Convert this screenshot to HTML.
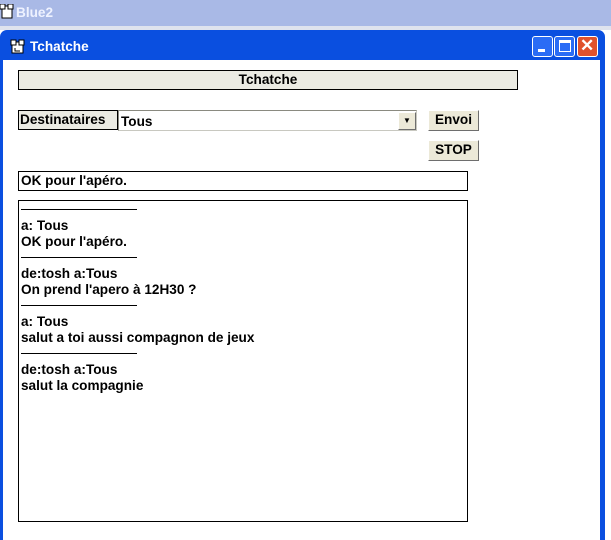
<!DOCTYPE html>
<html><head><meta charset="utf-8"><style>
*{margin:0;padding:0;box-sizing:border-box}
body{width:611px;height:540px;overflow:hidden;background:#fff;position:relative;font-family:"Liberation Sans",Arial,sans-serif;font-weight:bold;font-size:13.6px;color:#000}
.abs{position:absolute}
.top{left:0;top:0;width:611px;height:26px;background:#a9b9e6}
.gap{left:0;top:26px;width:611px;height:4px;background:#dfe3ee}
.win{left:0;top:30px;width:605px;height:510px;background:#0a4fe0;border-radius:7px 7px 0 0}
.client{left:4px;top:60px;width:597px;height:480px;background:#fff}
.btn{border:1px solid #fff;border-radius:3px;width:21px;height:21px;top:36px;background:#2a6cf5}
.box{border:1px solid #000}
.gray{background:#ebebe3}
.bt{background:#ece9d8;border:1px solid;border-color:#fff #6e6e6e #6e6e6e #fff;text-align:center;line-height:18px}
.hr{left:21px;width:116px;height:1px;background:#000}
.t{left:21px;line-height:16px}
</style></head><body>
<div class="abs top"></div>
<svg class="abs" style="left:0;top:4px" width="14" height="16"><rect x="2" y="2" width="10" height="12" fill="#fff" stroke="#000"/><rect x="0" y="0" width="5" height="5" fill="#fff" stroke="#000"/><rect x="8" y="0" width="5" height="5" fill="#fff" stroke="#000"/></svg>
<div class="abs" style="left:16px;top:5px;color:#eef2ff;font-size:13.6px">Blue2</div>
<div class="abs gap"></div>
<div class="abs win"></div>
<div class="abs client" style="left:3px"></div>
<svg class="abs" style="left:10px;top:39px" width="16" height="16"><rect x="2" y="3" width="11" height="11" fill="#fff" stroke="#000"/><rect x="1" y="1" width="5" height="5" fill="#fff" stroke="#000"/><rect x="9" y="1" width="5" height="5" fill="#fff" stroke="#000"/><path d="M5 9v3h5" stroke="#000" fill="none"/></svg>
<div class="abs" style="left:30px;top:39px;color:#fff;font-size:13.6px">Tchatche</div>
<div class="abs btn" style="left:532px"><div class="abs" style="left:5px;top:12px;width:7px;height:3px;background:#fff"></div></div>
<div class="abs btn" style="left:554px"><div class="abs" style="left:4px;top:3px;width:12px;height:12px;border:1px solid #fff;border-top-width:3px"></div></div>
<div class="abs btn" style="left:577px;background:#e0512c"><div class="abs" style="left:2px;top:-1px;color:#fff;font-size:17px">✕</div></div>
<div class="abs box gray" style="left:18px;top:70px;width:500px;height:20px;text-align:center;line-height:18px">Tchatche</div>
<div class="abs box gray" style="left:18px;top:110px;width:100px;height:20px;line-height:18px;padding-left:1px">Destinataires</div>
<div class="abs" style="left:118px;top:110px;width:299px;height:21px;border:1px solid;border-color:#8a8a80 #c8c8c0 #c8c8c0 #8a8a80;background:#fff;line-height:21px;padding-left:2px">Tous</div>
<div class="abs bt" style="left:398px;top:112px;width:18px;height:18px;font-size:8px;line-height:16px">▼</div>
<div class="abs bt" style="left:428px;top:110px;width:51px;height:21px">Envoi</div>
<div class="abs bt" style="left:428px;top:140px;width:51px;height:21px">STOP</div>
<div class="abs box" style="left:18px;top:171px;width:450px;height:20px;line-height:18px;padding-left:2px">OK pour l'apéro.</div>
<div class="abs box" style="left:18px;top:200px;width:450px;height:322px"></div>
<div class="abs hr" style="top:209px"></div>
<div class="abs t" style="top:218px">a: Tous<br>OK pour l'apéro.</div>
<div class="abs hr" style="top:257px"></div>
<div class="abs t" style="top:266px">de:tosh a:Tous<br>On prend l'apero à 12H30 ?</div>
<div class="abs hr" style="top:305px"></div>
<div class="abs t" style="top:314px">a: Tous<br>salut a toi aussi compagnon de jeux</div>
<div class="abs hr" style="top:353px"></div>
<div class="abs t" style="top:362px">de:tosh a:Tous<br>salut la compagnie</div>
</body></html>
